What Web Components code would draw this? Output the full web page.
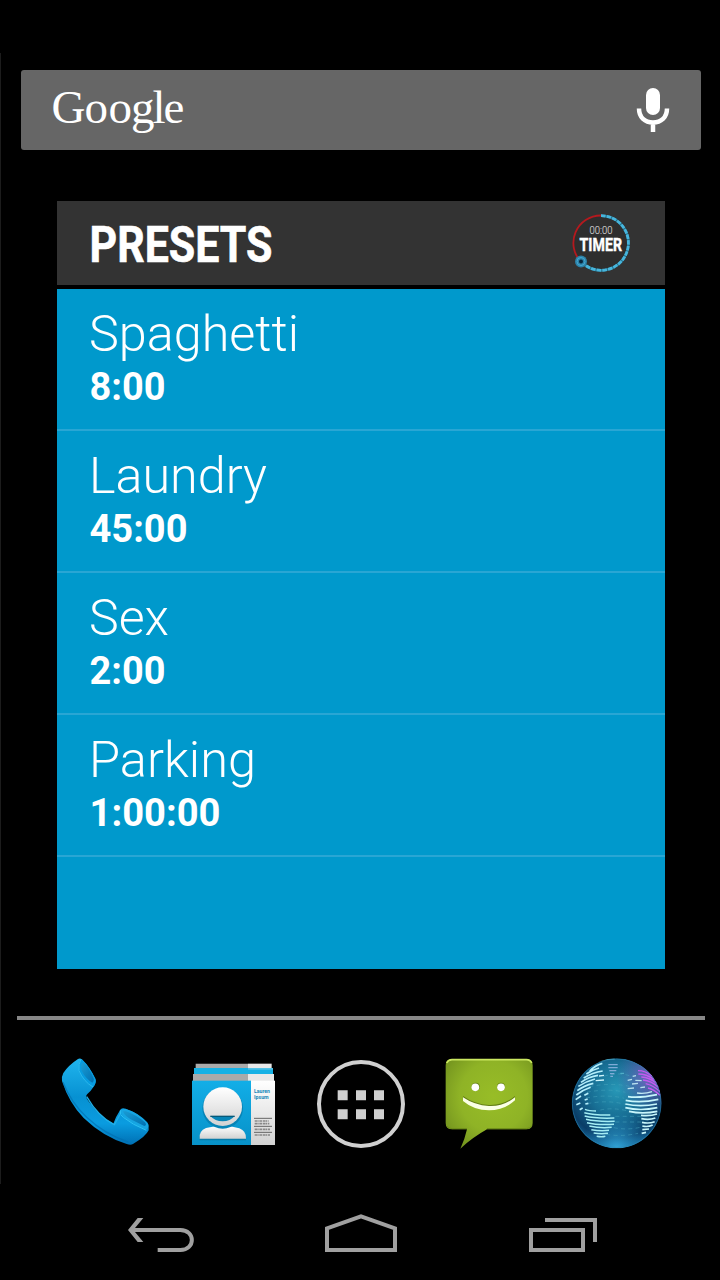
<!DOCTYPE html>
<html lang="en">
<head>
<meta charset="utf-8">
<title>Home</title>
<style>
    html, body{
    margin: 0;
    background: #000;
    }
    body{
    width: 720px;
    height: 1280px;
    overflow: hidden;
    font-family: Roboto, "Liberation Sans", sans-serif;
    color: #fff;
    }
</style>
</head>
<body>
<home-screen>
    <search-bar slot="search"></search-bar>
    <preset-widget slot="widget" heading="PRESETS">
        <preset-item time="8:00" name-width="210" time-width="76">Spaghetti</preset-item>
        <preset-item time="45:00" name-width="178" time-width="98">Laundry</preset-item>
        <preset-item time="2:00" name-width="80" time-width="76">Sex</preset-item>
        <preset-item time="1:00:00" name-width="167" time-width="131">Parking</preset-item>
    </preset-widget>
    <app-dock slot="dock"></app-dock>
    <nav-bar slot="nav"></nav-bar>
</home-screen>

<script>
function makeElement(name, html, setup) {
    const template = document.createElement('template')
    template.innerHTML = html
    window.customElements.define(name, class extends HTMLElement{
        constructor() {
            super();
            this.attachShadow({mode: 'open'})
            this.shadowRoot.appendChild(template.content.cloneNode(true))
        }
        connectedCallback() {
            if (setup) setup(this, this.shadowRoot)
        }
    })
}

makeElement('home-screen', `
<style>
    :host{
    display: flex;
    flex-direction: column;
    box-sizing: border-box;
    width: 720px;
    height: 1280px;
    padding-top: 70px;
    background: linear-gradient(#1c1c1c, #1c1c1c) 0 53px / 1px 1131px no-repeat #000;
    }
    .widget{
    padding: 51px 55px 47px 57px;
    }
    hr{
    width: 688px;
    height: 4px;
    margin: 0 0 0 17px;
    border: 0;
    background: #878787;
    }
</style>
<slot name="search"></slot>
<div class="widget"><slot name="widget"></slot></div>
<hr>
<slot name="dock"></slot>
<slot name="nav"></slot>
`)

makeElement('search-bar', `
<style>
    :host{
    display: flex;
    justify-content: space-between;
    width: 680px;
    height: 80px;
    margin-left: 21px;
    border-radius: 3px;
    background: #666;
    }
    svg{
    display: block;
    }
    text{
    font-family: "Liberation Serif", serif;
    font-size: 47px;
    fill: #fff;
    }
</style>
<svg width="200" height="80" viewBox="21 70 200 80">
    <text x="51.500 84.500 108.500 131 152.500 163.500" y="122.500">Google</text>
</svg>
<svg width="100" height="80" viewBox="601 70 100 80">
    <rect x="646" y="88" width="14" height="27" rx="7" fill="#fff"/>
    <path d="M639 108.500C639 117.500 645 122.500 653 122.500S667 117.500 667 108.500M653 122V132" fill="none" stroke="#fff" stroke-width="4.500"/>
</svg>
`)

makeElement('preset-widget', `
<style>
    :host{
    display: flex;
    flex-direction: column;
    gap: 4px;
    width: 608px;
    height: 768px;
    }
    header{
    display: flex;
    justify-content: space-between;
    height: 84px;
    background: #333;
    }
    .list{
    flex: 1;
    background: #0099cc;
    }
    svg{
    display: block;
    }
    #heading{
    font-size: 50px;
    font-weight: 700;
    fill: #fff;
    stroke: #fff;
    stroke-width: .6;
    }
</style>
<header>
    <svg width="300" height="84" viewBox="57 201 300 84">
        <text id="heading" x="89.500" y="262" textLength="183" lengthAdjust="spacingAndGlyphs"></text>
    </svg>
    <timer-badge></timer-badge>
</header>
<div class="list"><slot></slot></div>
`, (host, root) => {
    root.getElementById('heading').textContent = host.getAttribute('heading')
})

makeElement('timer-badge', `
<style>
    :host{
    display: block;
    }
    svg{
    display: block;
    }
</style>
<svg width="115" height="84" viewBox="550 201 115 84">
    <circle cx="601.300" cy="243" r="28" fill="#2e2e2e"/>
    <path d="M581.500 262.500A27.500 27.500 0 0 1 601 215.500" fill="none" stroke="#b5191e" stroke-width="1.800"/>
    <path d="M601 215.700A27.300 27.300 0 1 1 582 262.500" fill="none" stroke="#26748f" stroke-width="2.600"/>
    <path d="M601 215.700A27.300 27.300 0 1 1 582 262.500" fill="none" stroke="#47b5dc" stroke-width="2.800" stroke-dasharray="4.600 1.100"/>
    <circle cx="581" cy="261.500" r="6" fill="#2c82a8"/>
    <circle cx="581" cy="261.500" r="4" fill="none" stroke="#43a7d2" stroke-width="1"/>
    <circle cx="581" cy="261.500" r="2" fill="#07263c"/>
    <text x="589.500" y="234" font-size="10.500" font-weight="300" fill="#eee" textLength="23" lengthAdjust="spacingAndGlyphs">00:00</text>
    <text x="579.500" y="250.500" font-size="17.500" font-weight="700" fill="#fff" stroke="#fff" stroke-width=".4" textLength="42.500" lengthAdjust="spacingAndGlyphs">TIMER</text>
</svg>
`)

makeElement('preset-item', `
<style>
    :host{
    display: block;
    box-sizing: border-box;
    height: 142px;
    border-bottom: 2px solid #29a6d4;
    }
    svg{
    display: block;
    }
    text{
    fill: #fff;
    }
    #name{
    font-size: 50px;
    font-weight: 300;
    }
    #time{
    font-size: 38.500px;
    font-weight: 700;
    }
</style>
<svg width="400" height="140" viewBox="57 289 400 140">
    <text id="name" x="89" y="351" lengthAdjust="spacingAndGlyphs"></text>
    <text id="time" x="89.500" y="400" lengthAdjust="spacingAndGlyphs"></text>
</svg>
`, (host, root) => {
    const name = root.getElementById('name')
    const time = root.getElementById('time')
    name.textContent = host.textContent
    name.setAttribute('textLength', host.getAttribute('name-width'))
    time.textContent = host.getAttribute('time')
    time.setAttribute('textLength', host.getAttribute('time-width'))
})

makeElement('app-dock', `
<style>
    :host{
    display: grid;
    grid-template-columns: 110px 110px 105px 107px 110px;
    column-gap: 20px;
    align-items: center;
    box-sizing: border-box;
    height: 164px;
    padding-left: 50px;
    }
</style>
<phone-icon></phone-icon>
<people-icon></people-icon>
<apps-icon></apps-icon>
<message-icon></message-icon>
<globe-icon></globe-icon>
`)

const iconStyle = `
<style>
    :host{
    display: block;
    }
    svg{
    display: block;
    }
</style>
`

makeElement('phone-icon', iconStyle + `
<svg width="110" height="115" viewBox="0 0 330 345">
    <defs>
        <linearGradient id="body" x1="0" y1="0" x2="0" y2="1">
            <stop offset="0" stop-color="#20b5ee"/>
            <stop offset=".45" stop-color="#0791d2"/>
            <stop offset=".75" stop-color="#0a9ce0"/>
            <stop offset="1" stop-color="#0070b4"/>
        </linearGradient>
        <linearGradient id="cup" x1="0" y1="0" x2="1" y2="1">
            <stop offset="0" stop-color="#1a9bd3"/>
            <stop offset="1" stop-color="#0070b1"/>
        </linearGradient>
    </defs>
    <path d="M40 84Q55 61 84 42Q90 38 97 44Q118 65 136 101Q140 109 133 122Q122 139 112 147Q104 154 115 168Q150 217 190 236Q197 215 211 194Q217 188 226 191Q265 203 291 231Q297 237 296 256Q288 274 249 297Q242 301 230 297Q159 275 101 219Q57 174 36 108Q34 95 40 84Z" fill="url(#body)"/>
    <path d="M91 43Q85 58 87 77Q102 111 129 126Q140 113 136 101Q119 65 97 44Z" fill="#079ce0"/>
    <path d="M97 53Q91 61 95 77Q107 101 127 113Q135 106 129 96Q117 68 101 53Z" fill="url(#cup)"/>
    <path d="M93 42Q85 58 87 77Q102 111 129 126" fill="none" stroke="#2db9ec" stroke-width="3"/>
    <path d="M212 194Q210 205 220 215Q247 238 288 254Q296 250 295 239Q270 205 226 191Z" fill="#16a5e2"/>
    <path d="M219 199Q224 216 251 227L283 243Q292 242 285 232Q259 210 228 199Z" fill="url(#cup)"/>
    <path d="M211 196Q207 209 220 217Q247 239 289 256" fill="none" stroke="#2cc0f2" stroke-width="3"/>
    <path d="M110 155Q145 216 193 239L211 207" fill="none" stroke="#20aee6" stroke-width="4"/>
    <path d="M39 112Q63 173 110 217Q164 268 235 291" fill="none" stroke="#006cae" stroke-width="4" opacity=".6"/>
</svg>
`)

makeElement('people-icon', iconStyle + `
<svg width="105" height="105" viewBox="0 0 315 315">
    <defs>
        <linearGradient id="paper" x1="0" y1="0" x2="0" y2="1">
            <stop offset="0" stop-color="#fff"/>
            <stop offset="1" stop-color="#d2d2d2"/>
        </linearGradient>
        <linearGradient id="blue" x1="0" y1="0" x2="0" y2="1">
            <stop offset="0" stop-color="#12aee7"/>
            <stop offset="1" stop-color="#0791c8"/>
        </linearGradient>
    </defs>
    <path d="M47 41H204V54H47Z" fill="#aaa"/><path d="M204 41H275V54H204Z" fill="#e8e8e8"/>
    <path d="M42 54H279V72H42Z" fill="#16b1e5"/><path d="M204 54H279V59H204Z" fill="#54c2e6"/>
    <path d="M39 72H204V93H39Z" fill="#aaa"/><path d="M204 72H282V93H204Z" fill="#e8e8e8"/>
    <rect x="36" y="92" width="177" height="193" fill="url(#blue)"/>
    <rect x="213" y="92" width="72" height="193" fill="url(#paper)"/>
    <path d="M59 268Q56 244 78 234Q101 228 128 228T178 235Q199 243 198 268Z" fill="#087ba9" transform="translate(0 3)"/>
    <path d="M59 266Q56 243 78 234Q101 228 128 228T178 235Q199 243 198 266Z" fill="url(#paper)"/>
    <circle cx="128" cy="175" r="61" fill="#0784b6"/>
    <circle cx="128" cy="170" r="58" fill="url(#paper)"/>
    <path d="M91 198H164Q151 214 128 214T91 198Z" fill="#0784b6"/>
    <path d="M91 199H164" stroke="#075878" stroke-width="4"/>
    <text x="222" y="130" font-size="17" font-weight="700" fill="#1688b8" textLength="48" lengthAdjust="spacingAndGlyphs">Lauren</text>
    <text x="222" y="146" font-size="17" font-weight="700" fill="#1688b8" textLength="44" lengthAdjust="spacingAndGlyphs">Ipsum</text>
    <path d="M222 205H276M222 229H276M222 247H276" stroke="#666" stroke-width="3"/>
    <path d="M224 213H266M224 221H268M224 238H270M224 255H270" stroke="#888" stroke-width="5" stroke-dasharray="7 1 4 2 9 2"/>
</svg>
`)

makeElement('apps-icon', iconStyle + `
<svg width="105" height="105" viewBox="0 0 315 315">
    <circle cx="153" cy="162" r="126" fill="none" stroke="#d0d0d0" stroke-width="12"/>
    <path d="M83 121h30v30h-30zM138 121h30v30h-30zM192 121h30v30h-30zM83 178h30v30h-30zM138 178h30v30h-30zM192 178h30v30h-30z" fill="#d0d0d0"/>
</svg>
`)

makeElement('message-icon', iconStyle + `
<svg width="110" height="115" viewBox="0 0 330 345">
    <defs>
        <radialGradient id="green" cx=".55" cy=".42" r=".65">
            <stop offset="0" stop-color="#98bd27"/>
            <stop offset=".6" stop-color="#8fb326"/>
            <stop offset="1" stop-color="#75951f"/>
        </radialGradient>
    </defs>
    <path d="M51 42H274Q293 42 293 61V234Q293 253 274 253H156Q113 277 76 311Q90 281 96 253H51Q32 253 32 234V61Q32 42 51 42Z" fill="url(#green)"/>
    <path d="M35 54Q40 44 51 44H274Q286 44 290 54" fill="none" stroke="#cbe860" stroke-width="5"/>
    <path d="M36 244Q41 251 51 251H96M156 251H274Q285 251 290 243" fill="none" stroke="#6b8a18" stroke-width="3"/>
    <circle cx="122" cy="125" r="12" fill="#627e13"/><circle cx="198" cy="125" r="12" fill="#627e13"/>
    <circle cx="121" cy="127" r="11.500" fill="#fff"/><circle cx="198" cy="127" r="11.500" fill="#fff"/>
    <path d="M84 153Q119 178 162 180T240 153V164Q207 194 162 194T84 165Z" fill="#647f14"/>
    <path d="M84 157Q119 181 162 183T240 157V166Q207 196 162 196T84 168Z" fill="#fbffe5"/>
</svg>
`)

makeElement('globe-icon', iconStyle + `
<svg width="110" height="115" viewBox="0 0 330 345">
    <defs>
        <radialGradient id="sea" cx=".5" cy=".35" r=".68">
            <stop offset="0" stop-color="#2798b7"/>
            <stop offset=".45" stop-color="#176d93"/>
            <stop offset=".8" stop-color="#0a3d67"/>
            <stop offset="1" stop-color="#156ba0"/>
        </radialGradient>
        <radialGradient id="violet" cx=".9" cy=".2" r=".4">
            <stop offset="0" stop-color="#9860d2" stop-opacity=".85"/>
            <stop offset="1" stop-color="#6a70c0" stop-opacity="0"/>
        </radialGradient>
        <radialGradient id="glow" cx=".5" cy="1" r=".4">
            <stop offset="0" stop-color="#35ade0" stop-opacity=".9"/>
            <stop offset="1" stop-color="#2490c8" stop-opacity="0"/>
        </radialGradient>
        <clipPath id="ball"><circle cx="164" cy="175" r="135"/></clipPath>
    </defs>
    <g clip-path="url(#ball)" fill="none">
        <circle cx="164" cy="175" r="135" fill="url(#sea)"/>
        <circle cx="164" cy="175" r="135" fill="url(#violet)"/>
        <circle cx="164" cy="175" r="135" fill="url(#glow)"/>
        <path d="M82 125Q145 112 202 124M74 142Q137 129 190 142M72 159Q136 147 187 160M76 176Q137 164 190 178M115 195Q150 187 194 197M160 214H237M160 231H238M155 248Q196 256 234 247M133 268Q178 276 228 265M125 94Q168 81 202 92" stroke="#48a7bf" stroke-width="2.500" stroke-dasharray="12 10" opacity=".6"/>
        <!-- north-west land -->
        <path d="M83 78Q101 60 121 55M73 87Q92 74 111 69M65 99Q91 83 122 78M57 112Q80 95 108 91M49 124Q72 109 99 102M46 137Q65 122 94 115M43 150Q62 135 86 127M41 164L57 153M67 151L79 145M43 179L55 174M68 165L77 162M53 194L62 189M70 177L79 175" stroke="#b4eefb" stroke-width="5"/>
        <path d="M101 107L126 105M111 93L126 91" stroke="#cff5fc" stroke-width="4"/>
        <path d="M139 59H167M139 68H167M142 77H163M144 86H157M145 94H153" stroke="#7fabd7" stroke-width="4"/>
        <path d="M175 85H186M109 49Q136 40 158 42" stroke="#58b8ce" stroke-width="3"/>
        <!-- south-west land -->
        <path d="M69 193Q81 198 102 198M67 203Q98 211 145 210M68 213Q98 221 157 219M72 223Q106 231 158 229M75 233Q107 241 156 238M82 243Q112 250 149 247M88 254Q115 259 141 256M95 264Q116 268 138 265M104 274Q119 277 130 274" stroke="#a4edf4" stroke-width="4.500"/>
        <!-- east land -->
        <path d="M198 155Q231 160 285 149M191 166Q236 175 289 163M190 177Q235 187 285 177M190 188Q235 199 286 188M201 199Q242 208 286 199M237 211Q264 214 285 207M238 221Q261 226 280 219M240 232Q260 237 278 230M241 243Q258 247 272 240M241 254L261 252M239 265L252 262" stroke="#c7f5fb" stroke-width="5"/>
        <path d="M228 77Q251 77 269 93M229 87Q253 87 276 103M238 96Q262 97 283 114M243 105Q268 107 289 127M251 116Q274 121 294 140M258 129Q277 134 294 151" stroke="#c25bf0" stroke-width="4"/>
        <path d="M212 94L222 92M197 106L210 103M210 117L228 115M197 131L216 129M220 106L239 107M235 128L249 126" stroke="#b6dfed" stroke-width="4"/>
        <path d="M225 144Q250 147 270 140" stroke="#c3e9f4" stroke-width="4"/>
        <circle cx="164" cy="175" r="133" stroke="#2f86ad" stroke-width="3" opacity=".5"/>
    </g>
</svg>
`)

makeElement('nav-bar', `
<style>
    :host{
    display: flex;
    align-items: flex-start;
    gap: 100px;
    box-sizing: border-box;
    height: 96px;
    padding: 11px 0 0 110px;
    }
    svg{
    display: block;
    fill: none;
    stroke: #a0a0a0;
    stroke-width: 12;
    }
</style>
<svg width="100" height="75" viewBox="0 0 300 225">
    <path d="M66 105H211C257 105 257 165 211 165H143"/>
    <path d="M83 69H100L70 105L100 141H83L54 105Z" fill="#a0a0a0" stroke="none"/>
</svg>
<svg width="100" height="75" viewBox="0 0 300 225">
    <path d="M51 165V100L153 64L255 100V165Z"/>
</svg>
<svg width="110" height="75" viewBox="0 0 330 225">
    <path d="M63 105H219V165H63ZM105 75H255V141"/>
</svg>
`)
</script>
</body>
</html>
